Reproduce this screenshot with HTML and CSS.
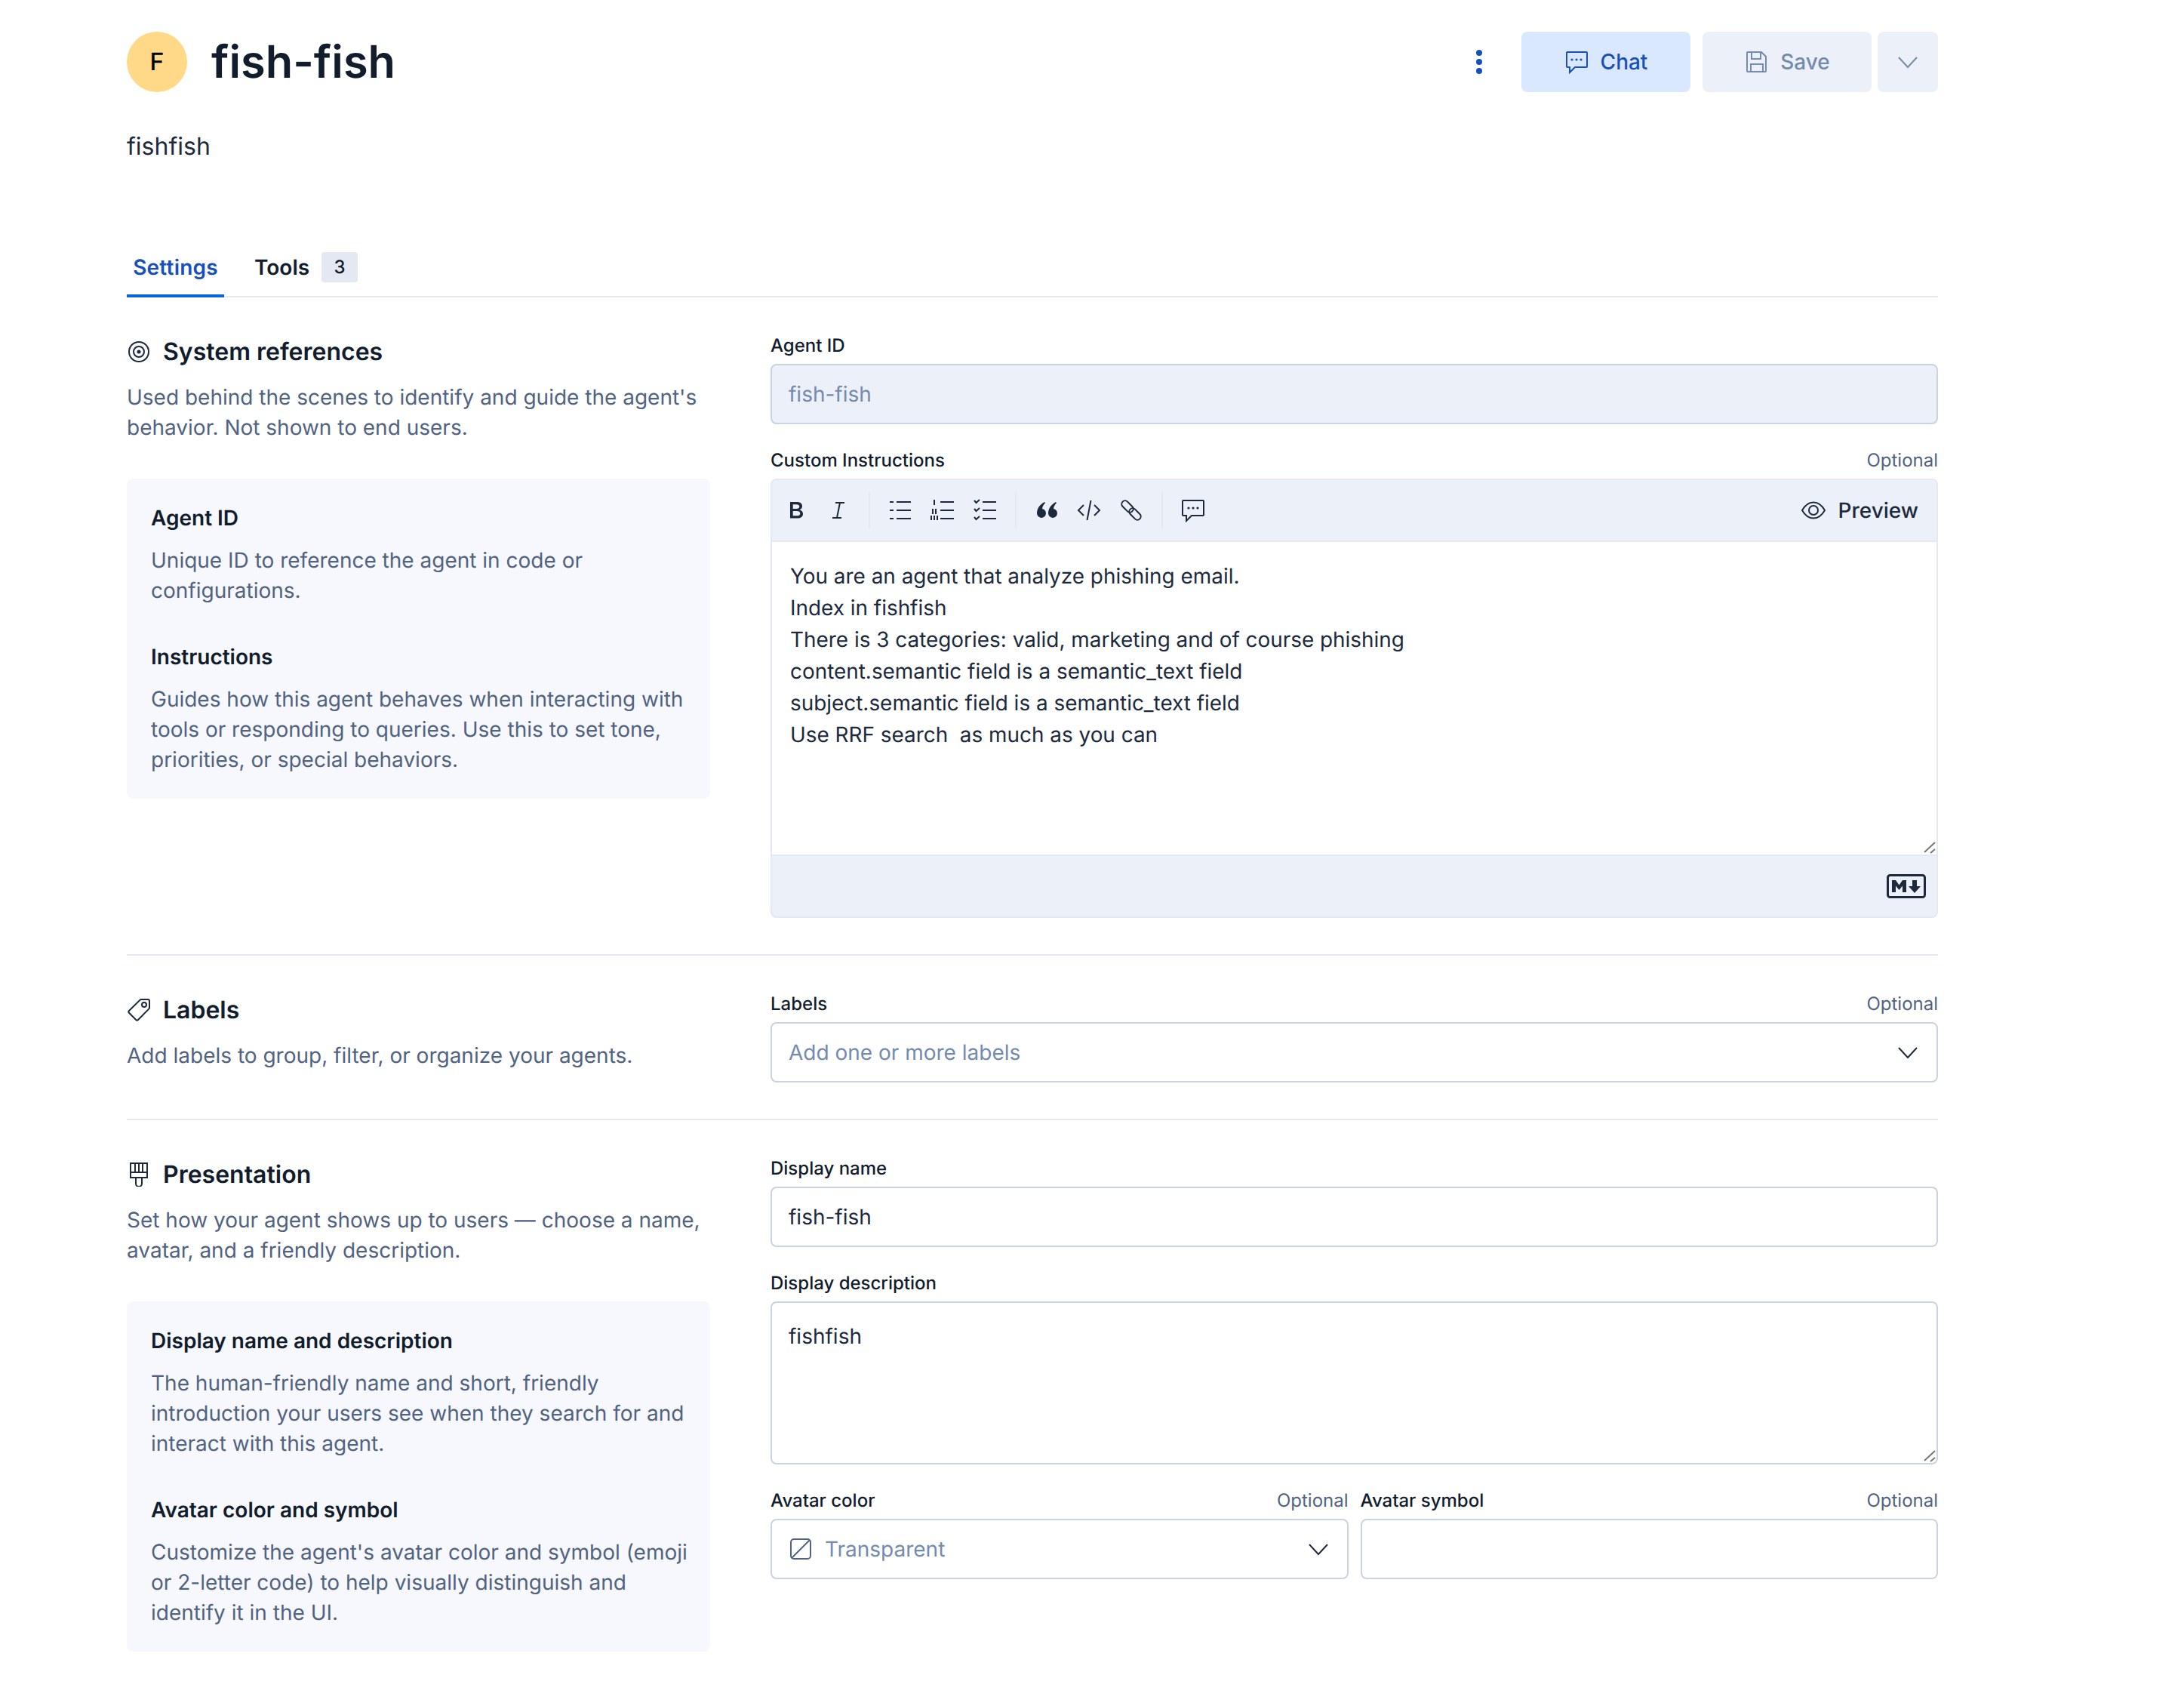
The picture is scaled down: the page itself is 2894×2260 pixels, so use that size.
FILE: index.html
```html
<!DOCTYPE html>
<html lang="en">
<head>
<meta charset="utf-8">
<title>fish-fish</title>
<link rel="stylesheet" href="styles.css">
</head>
<body>
<main class="page">
  <header class="top">
    <div class="avatar">F</div>
    <h1 class="title">fish-fish</h1>
    <button class="dots" aria-label="More">
      <svg width="32" height="32" viewBox="0 0 32 32"><circle cx="16" cy="4" r="4" fill="#1750ba"/><circle cx="16" cy="16" r="4" fill="#1750ba"/><circle cx="16" cy="28" r="4" fill="#1750ba"/></svg>
    </button>
    <button class="btn btn-chat">
      <svg width="32" height="32" viewBox="0 0 32 32" fill="none" stroke="currentColor" stroke-width="2"><path d="M3 3h26a1 1 0 0 1 1 1v18a1 1 0 0 1-1 1H14l-7 7v-7H4a1 1 0 0 1-1-1V4a1 1 0 0 1 1-1z"/><circle cx="10" cy="13" r="1.6" fill="currentColor" stroke="none"/><circle cx="16" cy="13" r="1.6" fill="currentColor" stroke="none"/><circle cx="22" cy="13" r="1.6" fill="currentColor" stroke="none"/></svg>
      <span>Chat</span>
    </button>
    <button class="btn btn-save">
      <svg width="32" height="32" viewBox="0 0 32 32" fill="none" stroke="currentColor" stroke-width="2"><path d="M5 3h18l6 6v19a1 1 0 0 1-1 1H5a1 1 0 0 1-1-1V4a1 1 0 0 1 1-1z"/><path d="M10 3v9h12V3M9 29V19h16v10"/></svg>
      <span>Save</span>
    </button>
    <button class="btn-more" aria-label="More save options">
      <svg width="32" height="32" viewBox="0 0 32 32" fill="none" stroke="currentColor" stroke-width="2"><path d="M4 10l12 13 12-13"/></svg>
    </button>
  </header>
  <p class="subtitle">fishfish</p>

  <nav class="tabs">
    <div class="tab tab-active">Settings</div>
    <div class="tab">Tools <span class="count">3</span></div>
  </nav>

  <section class="section sec-system">
    <div class="aside">
      <h2 class="sec-title">
        <svg width="32" height="32" viewBox="0 0 32 32" fill="none" stroke="#1d2a3e" stroke-width="2"><circle cx="16" cy="16" r="13"/><circle cx="16" cy="16" r="7"/><circle cx="16" cy="16" r="2.5" fill="#1d2a3e" stroke="none"/></svg>
        System references
      </h2>
      <p class="sec-desc">Used behind the scenes to identify and guide the agent's behavior. Not shown to end users.</p>
      <div class="help">
        <h3 class="help-title">Agent ID</h3>
        <p class="help-text">Unique ID to reference the agent in code or configurations.</p>
        <h3 class="help-title">Instructions</h3>
        <p class="help-text">Guides how this agent behaves when interacting with tools or responding to queries. Use this to set tone, priorities, or special behaviors.</p>
      </div>
    </div>
    <div class="fields">
      <div class="field">
        <div class="label-row"><label class="label">Agent ID</label></div>
        <div class="input input-disabled">fish-fish</div>
      </div>
      <div class="field">
        <div class="label-row"><label class="label">Custom Instructions</label><span class="optional">Optional</span></div>
        <div class="editor">
          <div class="toolbar">
            <span class="tool"><svg class="ic" viewBox="0 0 32 32"><path fill="#1d2a3e" d="M8 5h9c4.500 0 7 2.100 7 5.600 0 2.400-1.300 4.100-3.400 4.800 2.600.5 4.400 2.500 4.400 5.300 0 3.700-2.800 5.800-7.500 5.800H8zm3.700 3.200v5.900h4.700c2.500 0 3.900-1.100 3.900-3S18.900 8.200 16.500 8.200zm0 8.900v6.200h5.300c2.800 0 4.300-1.100 4.300-3.100s-1.600-3.100-4.500-3.100z"/></svg></span>
            <span class="tool"><svg class="ic" viewBox="0 0 32 32" fill="none" stroke="#1d2a3e" stroke-width="2"><path d="M12 6h12M8 26h12M18 6l-4 20"/></svg></span>
            <span class="tsep"></span>
            <span class="tool"><svg class="ic" viewBox="0 0 32 32" fill="none" stroke="#1d2a3e" stroke-width="2"><path d="M2 5h5M2 16h5M2 27h5M11 5h19M11 16h19M11 27h19"/></svg></span>
            <span class="tool"><svg class="ic" viewBox="0 0 32 32" fill="none" stroke="#1d2a3e" stroke-width="2"><path d="M5 2v7M3 14v7M7 14v7M1 23v6M5 23v6M9 23v6M13 5h18M13 16h18M13 27h18"/></svg></span>
            <span class="tool"><svg class="ic" viewBox="0 0 32 32" fill="none" stroke="#1d2a3e" stroke-width="2"><path d="M2 3l2.500 3L9 2M2 14l2.500 3L9 13M2 25l2.500 3L9 24M13 5h18M13 16h18M13 27h18"/></svg></span>
            <span class="tsep"></span>
            <span class="tool"><svg class="ic" viewBox="0 0 32 32"><path fill="#1d2a3e" d="M13 5C7.500 8 3 13 3 20a6 6 0 1 0 7-6c.4-3 1.600-5.500 4-7.500zM28 5c-5.500 3-10 8-10 15a6 6 0 1 0 7-6c.4-3 1.600-5.500 4-7.500z"/></svg></span>
            <span class="tool"><svg class="ic" viewBox="0 0 32 32" fill="none" stroke="#1d2a3e" stroke-width="2"><path d="M9 9l-7 7 7 7M23 9l7 7-7 7M18.500 3l-5 26"/></svg></span>
            <span class="tool"><svg class="ic" viewBox="0 0 32 32" fill="none" stroke="#1d2a3e" stroke-width="2"><rect x="2" y="6.500" width="18" height="9" rx="4.500" transform="rotate(45 11 11)"/><rect x="12" y="16.500" width="18" height="9" rx="4.500" transform="rotate(45 21 21)"/></svg></span>
            <span class="tsep"></span>
            <span class="tool"><svg class="ic" viewBox="0 0 32 32" fill="none" stroke="#1d2a3e" stroke-width="2"><path d="M3 3h26a1 1 0 0 1 1 1v18a1 1 0 0 1-1 1H14l-7 7v-7H3a1 1 0 0 1-1-1V4a1 1 0 0 1 1-1z"/><circle cx="10" cy="13" r="1.600" fill="#1d2a3e" stroke="none"/><circle cx="16" cy="13" r="1.600" fill="#1d2a3e" stroke="none"/><circle cx="22" cy="13" r="1.600" fill="#1d2a3e" stroke="none"/></svg></span>
            <span class="preview">
              <svg class="ic" viewBox="0 0 32 32" fill="none" stroke="#1d2a3e" stroke-width="2"><path d="M1 16C5 9 10 5.500 16 5.500S27 9 31 16c-4 7-9 10.500-15 10.500S5 23 1 16z"/><circle cx="16" cy="16" r="6"/></svg>
              Preview
            </span>
          </div>
          <div class="area-wrap">
            <textarea class="editor-text" readonly>You are an agent that analyze phishing email.
Index in fishfish
There is 3 categories: valid, marketing and of course phishing
content.semantic field is a semantic_text field
subject.semantic field is a semantic_text field
Use RRF search  as much as you can</textarea>
            <svg class="grip grip-flush" width="18" height="18" viewBox="0 0 18 18" fill="none" stroke="#777" stroke-width="2"><path d="M2 15L16 2M10 16l6-5"/></svg>
          </div>
          <div class="editor-foot">
            <svg width="52" height="32" viewBox="0 0 52 32"><rect x="1.500" y="1.500" width="49" height="29" rx="3" fill="none" stroke="#1d2a3e" stroke-width="3"/><path fill="#1d2a3e" d="M7 24V8h5l4.500 6.500L21 8h5v16h-5v-8.500L16.500 21 12 15.500V24zM34 8h6v8h5l-8 9-8-9h5z"/></svg>
          </div>
        </div>
      </div>
    </div>
  </section>

  <section class="section sec-labels">
    <div class="aside">
      <h2 class="sec-title">
        <svg width="32" height="32" viewBox="0 0 32 32" fill="none" stroke="#1d2a3e" stroke-width="2"><path d="M19 2h9a2 2 0 0 1 2 2v9a2 2 0 0 1-.6 1.400L15 29a2 2 0 0 1-2.800 0L3 19.800A2 2 0 0 1 3 17L17.600 2.600A2 2 0 0 1 19 2z"/><circle cx="23" cy="9" r="3"/></svg>
        Labels
      </h2>
      <p class="sec-desc">Add labels to group, filter, or organize your agents.</p>
    </div>
    <div class="fields">
      <div class="field">
        <div class="label-row"><label class="label">Labels</label><span class="optional">Optional</span></div>
        <div class="input placeholder">Add one or more labels
          <svg class="chev" viewBox="0 0 32 32" fill="none" stroke="#1d2a3e" stroke-width="2"><path d="M4 10l12 13 12-13"/></svg>
        </div>
      </div>
    </div>
  </section>

  <section class="section sec-presentation">
    <div class="aside">
      <h2 class="sec-title">
        <svg width="32" height="32" viewBox="0 0 32 32" fill="none" stroke="#1d2a3e" stroke-width="2"><path d="M5 1h22v19H5zM5 13h22M11 1v12M16 1v12M21 1v12M12 20v8a4 4 0 0 0 8 0v-8"/></svg>
        Presentation
      </h2>
      <p class="sec-desc">Set how your agent shows up to users — choose a name, avatar, and a friendly description.</p>
      <div class="help">
        <h3 class="help-title">Display name and description</h3>
        <p class="help-text">The human-friendly name and short, friendly introduction your users see when they search for and interact with this agent.</p>
        <h3 class="help-title">Avatar color and symbol</h3>
        <p class="help-text">Customize the agent's avatar color and symbol (emoji or 2-letter code) to help visually distinguish and identify it in the UI.</p>
      </div>
    </div>
    <div class="fields">
      <div class="field">
        <div class="label-row"><label class="label">Display name</label></div>
        <div class="input">fish-fish</div>
      </div>
      <div class="field">
        <div class="label-row"><label class="label">Display description</label></div>
        <div class="area-wrap">
          <textarea class="area" readonly>fishfish</textarea>
          <svg class="grip" width="18" height="18" viewBox="0 0 18 18" fill="none" stroke="#777" stroke-width="2"><path d="M2 15L16 2M10 16l6-5"/></svg>
        </div>
      </div>
      <div class="pair">
        <div class="pair-item">
          <div class="label-row"><label class="label">Avatar color</label><span class="optional">Optional</span></div>
          <div class="input placeholder">
            <svg class="swatch" viewBox="0 0 32 32" fill="none" stroke="#516381" stroke-width="2"><rect x="3" y="3" width="26" height="26" rx="4"/><path d="M4 28L28 4"/></svg>
            Transparent
            <svg class="chev" viewBox="0 0 32 32" fill="none" stroke="#1d2a3e" stroke-width="2"><path d="M4 10l12 13 12-13"/></svg>
          </div>
        </div>
        <div class="pair-item">
          <div class="label-row"><label class="label">Avatar symbol</label><span class="optional">Optional</span></div>
          <div class="input"></div>
        </div>
      </div>
    </div>
  </section>
</main>
</body>
</html>
```
FILE: styles.css
```css
* { box-sizing: border-box; }
html, body { margin: 0; padding: 0; background: #fff; }
body { font-family: Inter, "Liberation Sans", sans-serif; color: #1d2a3e; font-size: 28px; line-height: 40px; text-rendering: geometricPrecision; }
h1, h2, h3, p { margin: 0; }
button { font-family: inherit; border: 0; padding: 0; background: none; }
.page { width: 2400px; margin-left: 168px; padding-top: 42px; height: 2260px; overflow: hidden; }

.top { display: flex; align-items: center; height: 80px; }
.avatar { width: 80px; height: 80px; border-radius: 50%; background: #ffd987; color: #000; font-size: 32px; font-weight: 500; display: flex; align-items: center; justify-content: center; flex: none; }
.title { font-size: 59.5px; line-height: 64px; font-weight: 600; color: #111c2c; margin-left: 32px; margin-right: auto; }
.dots { width: 32px; height: 32px; margin-right: 40px; }
.dots svg { display: block; }
.btn { width: 224px; height: 80px; border-radius: 8px; display: flex; align-items: center; justify-content: center; gap: 16px; font-size: 28px; font-weight: 500; }
.btn-chat { background: #d9e8ff; color: #1750ba; margin-right: 16px; }
.btn-save { background: #ecf0f9; color: #758bad; margin-right: 8px; }
.btn-more { width: 80px; height: 80px; border-radius: 8px; background: #ecf0f9; color: #758bad; display: flex; align-items: center; justify-content: center; }

.subtitle { font-size: 32px; line-height: 48px; margin-top: 48px; color: #1d2a3e; }

.tabs { display: flex; height: 80px; margin-top: 96px; border-bottom: 2px solid #e3e8f2; gap: 32px; align-items: stretch; }
.tab { font-size: 28px; font-weight: 600; padding: 0 8px; display: flex; align-items: center; gap: 16px; color: #111c2c; margin-bottom: -2px; }
.tab-active { color: #1750ba; border-bottom: 4px solid #0b64dd; padding-top: 4px; width: 129px; justify-content: center; letter-spacing: 0.2px; }
.count { width: 48px; height: 40px; background: #e3e8f2; border-radius: 4px; font-size: 24px; font-weight: 500; display: flex; align-items: center; justify-content: center; line-height: 1; }

.section { display: grid; grid-template-columns: 773px 1547px; column-gap: 80px; padding-top: 48px; }
.sec-system, .sec-labels { padding-bottom: 48px; border-bottom: 2px solid #e3e8f2; }

.sec-title { display: flex; align-items: center; gap: 16px; font-size: 32px; line-height: 48px; font-weight: 600; color: #111c2c; }
.sec-title svg { flex: none; }
.sec-desc { margin-top: 16px; color: #516381; }
.help { margin-top: 48px; background: #f6f8fd; border-radius: 8px; padding: 32px 24px 32px 32px; }
.help-title { font-size: 28px; line-height: 40px; font-weight: 600; color: #111c2c; }
.help-text { margin-top: 16px; color: #516381; }
.help-text + .help-title { margin-top: 48px; }

.fields { display: flex; flex-direction: column; gap: 32px; }
.label-row { display: flex; justify-content: space-between; align-items: center; height: 32px; margin-bottom: 8px; }
.label { font-size: 24px; line-height: 32px; font-weight: 500; color: #111c2c; }
.optional { font-size: 24px; line-height: 32px; color: #516381; }

.input { height: 80px; border: 2px solid #cad3e2; border-radius: 8px; padding: 0 22px; display: flex; align-items: center; background: #fff; }
.input-disabled { background: #ebf0f9; color: #758bad; }
.placeholder { color: #758bad; }
.chev { width: 32px; height: 32px; margin-left: auto; flex: none; }
.swatch { width: 32px; height: 32px; margin-right: 16px; flex: none; }

.editor { border: 2px solid #e3e8f2; border-radius: 8px; background: #ebf0f9; overflow: hidden; display: flex; flex-direction: column; }
.toolbar { display: flex; align-items: center; height: 82px; padding-left: 4px; background: #ebf0f9; border-bottom: 2px solid #e3e8f2; }
.tool { width: 56px; height: 48px; display: flex; align-items: center; justify-content: center; flex: none; }
.ic { width: 32px; height: 32px; display: block; }
.tsep { width: 2px; height: 48px; background: #e3e8f2; margin: 0 12px; flex: none; }
.preview { margin-left: auto; margin-right: 24px; display: flex; align-items: center; gap: 16px; font-weight: 500; }
.area-wrap { position: relative; }
.grip { position: absolute; right: 2px; bottom: 2px; pointer-events: none; }
.grip-flush { right: 0; bottom: 0; }
.editor-text { display: block; width: 100%; height: 414px; border: 0; outline: 0; padding: 24px; font: 400 27.9px/42px Inter, "Liberation Sans", sans-serif; text-rendering: geometricPrecision; color: #1d2a3e; background: #fff; resize: none; }
.editor-foot { height: 82px; border-top: 2px solid #e3e8f2; display: flex; align-items: center; justify-content: flex-end; padding-right: 14px; }

.area { display: block; width: 100%; height: 216px; border: 2px solid #cad3e2; border-radius: 8px; outline: 0; padding: 24px 22px; font: 400 28px/40px Inter, "Liberation Sans", sans-serif; text-rendering: geometricPrecision; color: #1d2a3e; background: #fff; resize: none; }
.pair { display: grid; grid-template-columns: 1fr 1fr; column-gap: 16px; }
```
